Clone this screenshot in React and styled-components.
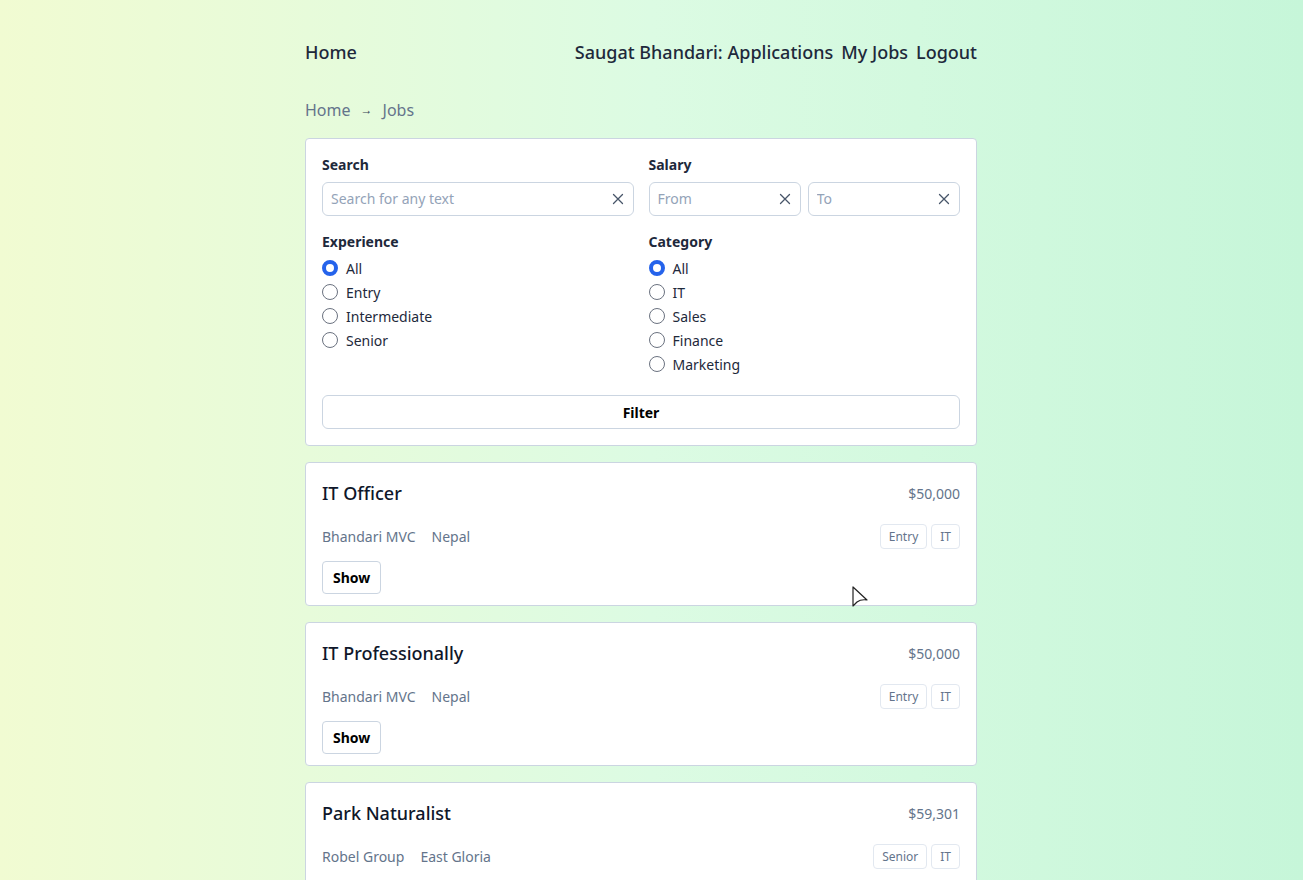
import styled, { createGlobalStyle } from 'styled-components'

const GlobalStyle = createGlobalStyle`
	html, body {
		margin: 0;
		padding: 0;
	}
	body {
		font-family: "Noto Sans", "Open Sans", sans-serif;
		color: #1e293b;
		background: linear-gradient(to right, #f1fbd2 0%, #dcfbe3 50%, #c6f6d9 100%);
		background-attachment: fixed;
		min-height: 100vh;
	}
	* {
		box-sizing: border-box;
	}
`

const jobs = [
	{ title: 'IT Officer', salary: '$50,000', company: 'Bhandari MVC', location: 'Nepal', tags: ['Entry', 'IT'] },
	{ title: 'IT Professionally', salary: '$50,000', company: 'Bhandari MVC', location: 'Nepal', tags: ['Entry', 'IT'] },
	{ title: 'Park Naturalist', salary: '$59,301', company: 'Robel Group', location: 'East Gloria', tags: ['Senior', 'IT'] },
]

const experience = ['All', 'Entry', 'Intermediate', 'Senior']
const categories = ['All', 'IT', 'Sales', 'Finance', 'Marketing']

const ClearIcon = () => (
	<svg width="12" height="12" viewBox="0 0 12 12" fill="none" stroke="#475569" strokeWidth="1.3" strokeLinecap="round">
		<path d="M1.5 1.5l9 9M10.5 1.5l-9 9" />
	</svg>
)

const TextField = ({ placeholder }) => (
	<Field>
		<input type="text" placeholder={placeholder} />
		<ClearIcon />
	</Field>
)

const RadioGroup = ({ name, options }) => (
	<Radios>
		{options.map((opt, i) => (
			<RadioRow key={opt}>
				<input type="radio" name={name} defaultChecked={i === 0} />
				{opt}
			</RadioRow>
		))}
	</Radios>
)

const JobCard = ({ job }) => (
	<Card $job>
		<TopRow>
			<Title>{job.title}</Title>
			<Salary>{job.salary}</Salary>
		</TopRow>
		<MetaRow>
			<Meta>
				<span>{job.company}</span>
				<span>{job.location}</span>
			</Meta>
			<Tags>
				{job.tags.map(t => <Tag key={t}>{t}</Tag>)}
			</Tags>
		</MetaRow>
		<ShowButton>Show</ShowButton>
	</Card>
)

export default function App() {
	return (
		<>
			<GlobalStyle />
			<Shell>
				<Page>
					<Nav>
						<NavLink>Home</NavLink>
						<NavRight>
							<NavLink>Saugat Bhandari: Applications</NavLink>
							<NavLink>My Jobs</NavLink>
							<NavLink>Logout</NavLink>
						</NavRight>
					</Nav>
					<Crumbs>
						<span>Home</span>
						<Arrow>→</Arrow>
						<span>Jobs</span>
					</Crumbs>
					<Card>
						<FilterGrid>
							<div>
								<Label>Search</Label>
								<TextField placeholder="Search for any text" />
							</div>
							<div>
								<Label>Salary</Label>
								<Pair>
									<TextField placeholder="From" />
									<TextField placeholder="To" />
								</Pair>
							</div>
							<div>
								<Label $group>Experience</Label>
								<RadioGroup name="experience" options={experience} />
							</div>
							<div>
								<Label $group>Category</Label>
								<RadioGroup name="category" options={categories} />
							</div>
						</FilterGrid>
						<FilterButton>Filter</FilterButton>
					</Card>
					{jobs.map(job => <JobCard key={job.title} job={job} />)}
				</Page>
			</Shell>
			<Cursor width="18" height="26" viewBox="0 0 18 26">
				<path d="M1 1 L1 20 L5 16 Q9 13 15 14 Z" fill="#fff" stroke="#222" strokeWidth="1.2" strokeLinejoin="round" />
			</Cursor>
		</>
	)
}

const Shell = styled.div`
	padding-right: 21px;
`

const Page = styled.div`
	max-width: 672px;
	margin: 0 auto;
	padding: 40px 0 40px;
	display: flex;
	flex-direction: column;
	gap: 16px;
`

const Nav = styled.nav`
	display: flex;
	justify-content: space-between;
	align-items: center;
	height: 24px;
	margin-bottom: 18px;
`

const NavRight = styled.div`
	display: flex;
	gap: 8px;
`

const NavLink = styled.a`
	font-size: 18px;
	font-weight: 500;
	color: #1e293b;
	line-height: 24px;
	cursor: pointer;
`

const Crumbs = styled.div`
	display: flex;
	align-items: center;
	gap: 10px;
	font-size: 16px;
	line-height: 24px;
	color: #64748b;
`

const Arrow = styled.span`
	font-size: 12px;
	color: #334155;
`

const Card = styled.div`
	background: #fff;
	border: 1px solid #cbd5e1;
	border-radius: 4px;
	padding: ${p => (p.$job ? '15px 16px 11px' : '16px')};
`

const FilterGrid = styled.div`
	display: grid;
	grid-template-columns: minmax(0, 1fr) minmax(0, 1fr);
	column-gap: 15px;
	row-gap: 16px;
`

const Label = styled.div`
	font-size: 14px;
	font-weight: 700;
	line-height: 20px;
	color: #1e293b;
	margin-bottom: ${p => (p.$group ? '4px' : '7px')};
`

const Pair = styled.div`
	display: flex;
	gap: 7px;
`

const Field = styled.label`
	flex: 1;
	min-width: 0;
	display: flex;
	align-items: center;
	height: 34px;
	border: 1px solid #cbd5e1;
	border-radius: 6px;
	padding: 0 9px 1px 8px;
	background: #fff;

	input {
		flex: 1;
		min-width: 0;
		border: none;
		outline: none;
		font-family: inherit;
		font-size: 14px;
		color: #1e293b;
		padding: 0;
		background: transparent;
	}

	input::placeholder {
		color: #94a3b8;
	}
`

const Radios = styled.div`
	display: flex;
	flex-direction: column;
`

const RadioRow = styled.label`
	display: flex;
	align-items: center;
	gap: 8px;
	height: 24px;
	font-size: 14px;
	color: #1e293b;

	input {
		appearance: none;
		margin: 0;
		width: 16px;
		height: 16px;
		border-radius: 50%;
		border: 1px solid #6b7280;
		background: #fff;
	}

	input:checked {
		border: 4.5px solid #2563eb;
		background: #fff;
	}
`

const FilterButton = styled.button`
	display: block;
	width: 100%;
	height: 34px;
	margin-top: 19px;
	background: #fff;
	border: 1px solid #cbd5e1;
	border-radius: 6px;
	font-family: inherit;
	font-size: 14px;
	font-weight: 700;
	color: #000;
`

const TopRow = styled.div`
	display: flex;
	justify-content: space-between;
	align-items: center;
	height: 30px;
`

const Title = styled.h2`
	margin: 0;
	font-size: 18px;
	font-weight: 500;
	color: #0f172a;
`

const Salary = styled.span`
	font-size: 14px;
	color: #64748b;
`

const MetaRow = styled.div`
	display: flex;
	justify-content: space-between;
	align-items: center;
	margin-top: 16px;
`

const Meta = styled.div`
	display: flex;
	gap: 16px;
	font-size: 14px;
	color: #64748b;
`

const Tags = styled.div`
	display: flex;
	gap: 4px;
`

const Tag = styled.span`
	display: inline-flex;
	align-items: center;
	height: 25px;
	padding: 0 8px;
	border: 1px solid #e2e8f0;
	border-radius: 4px;
	font-size: 12px;
	color: #64748b;
`

const ShowButton = styled.button`
	margin-top: 12px;
	height: 33px;
	padding: 0 10px;
	background: #fff;
	border: 1px solid #cbd5e1;
	border-radius: 4px;
	font-family: inherit;
	font-size: 14px;
	font-weight: 700;
	color: #000;
`

const Cursor = styled.svg`
	position: fixed;
	left: 852px;
	top: 586px;
	pointer-events: none;
`
